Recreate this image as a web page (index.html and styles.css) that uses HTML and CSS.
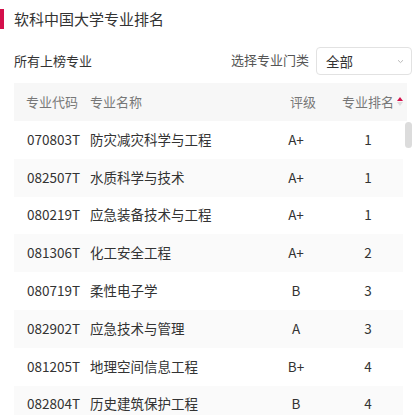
FILE: index.html
```html
<!DOCTYPE html>
<html lang="zh">
<head>
<meta charset="utf-8">
<link rel="stylesheet" href="styles.css">
</head>
<body>
<div class="page">
  <h2 class="title">软科中国大学专业排名</h2>
  <div class="toolbar">
    <span class="sub">所有上榜专业</span>
    <div class="filter">
      <span class="filter-label">选择专业门类</span>
      <div class="select">
        <span>全部</span>
        <svg class="chev" width="7" height="5" viewBox="0 0 7 5"><path d="M1 1.2 L3.5 3.6 L6 1.2" fill="none" stroke="#bbb" stroke-width="1"/></svg>
      </div>
    </div>
  </div>
  <div class="table">
    <div class="thead">
      <div class="c-code">专业代码</div>
      <div class="c-name">专业名称</div>
      <div class="c-rate h-rate">评级</div>
      <div class="c-rank h-rank">专业排名
        <span class="sort"><i class="up"></i><i class="down"></i></span>
      </div>
    </div>
    <div class="tbody">
      <div class="rows">
        <div class="row"><div class="c-code">070803T</div><div class="c-name">防灾减灾科学与工程</div><div class="c-rate">A+</div><div class="c-rank">1</div></div>
        <div class="row"><div class="c-code">082507T</div><div class="c-name">水质科学与技术</div><div class="c-rate">A+</div><div class="c-rank">1</div></div>
        <div class="row"><div class="c-code">080219T</div><div class="c-name">应急装备技术与工程</div><div class="c-rate">A+</div><div class="c-rank">1</div></div>
        <div class="row"><div class="c-code">081306T</div><div class="c-name">化工安全工程</div><div class="c-rate">A+</div><div class="c-rank">2</div></div>
        <div class="row"><div class="c-code">080719T</div><div class="c-name">柔性电子学</div><div class="c-rate">B</div><div class="c-rank">3</div></div>
        <div class="row"><div class="c-code">082902T</div><div class="c-name">应急技术与管理</div><div class="c-rate">A</div><div class="c-rank">3</div></div>
        <div class="row"><div class="c-code">081205T</div><div class="c-name">地理空间信息工程</div><div class="c-rate">B+</div><div class="c-rank">4</div></div>
        <div class="row"><div class="c-code">082804T</div><div class="c-name">历史建筑保护工程</div><div class="c-rate">B</div><div class="c-rank">4</div></div>
      </div>
      <div class="track"><div class="thumb"></div></div>
    </div>
  </div>
</div>
</body>
</html>
```

FILE: styles.css
```css
* { box-sizing: border-box; margin: 0; padding: 0; }
html, body { background: #fff; }
body {
  font-family: "Noto Sans CJK SC", "Noto Sans", sans-serif;
  color: #333;
  overflow: hidden;
  height: 415px;
}
.page { padding-top: 9px; }
.title {
  font-size: 15px;
  font-weight: 400;
  color: #333;
  line-height: 20px;
  padding-left: 14px;
  border-left: 4px solid #d4104b;
  text-indent: -4px;
  height: 20px;
}
.toolbar {
  display: flex;
  align-items: center;
  justify-content: space-between;
  margin-top: 18px;
  padding-left: 14px;
  padding-right: 3px;
}
.sub { font-size: 13px; color: #333; margin-top: -2px; }
.filter { display: flex; align-items: center; gap: 7px; }
.filter-label { font-size: 13px; color: #555; margin-top: -3px; }
.select {
  width: 96px;
  height: 28px;
  border: 1px solid #e2e2e2;
  border-radius: 4px;
  display: flex;
  align-items: center;
  justify-content: space-between;
  padding: 0 7px 0 9px;
  font-size: 13.5px;
  color: #333;
}
.chev { margin-top: 1px; }
.table { margin-top: 8px; margin-left: 14px; }
.thead {
  width: 393px;
  height: 38px;
  background: #f7f7f7;
  display: grid;
  grid-template-columns: 76px 173px 66px 78px;
  align-items: center;
  font-size: 13px;
  color: #777;
  padding-bottom: 2px;
}
.thead .c-code { padding-left: 12px; }
.h-rate { text-align: left; padding-left: 27px; }
.h-rank { display: flex; align-items: center; padding-left: 13px; }
.sort { display: flex; flex-direction: column; gap: 1px; margin-left: 3px; }
.sort i { display: block; width: 0; height: 0; border-left: 3px solid transparent; border-right: 3px solid transparent; }
.sort .up { border-bottom: 4px solid #d4104b; }
.sort .down { border-top: 4px solid #ddd; }
.tbody { display: flex; }
.rows { width: 389px; }
.row {
  height: 37.8px;
  display: grid;
  grid-template-columns: 76px 173px 66px 74px;
  align-items: center;
  font-size: 13.5px;
  color: #333;
  padding-bottom: 2px;
}
.row:nth-child(even) { background: #fafafa; }
.row .c-code { padding-left: 13px; }
.row .c-rate { text-align: center; }
.row .c-rank { text-align: center; padding-left: 4px; }
.track { width: 10px; padding-left: 2px; padding-top: 1px; }
.thumb { width: 7px; height: 26px; background: #dcdcdc; border-radius: 4px; }
```
